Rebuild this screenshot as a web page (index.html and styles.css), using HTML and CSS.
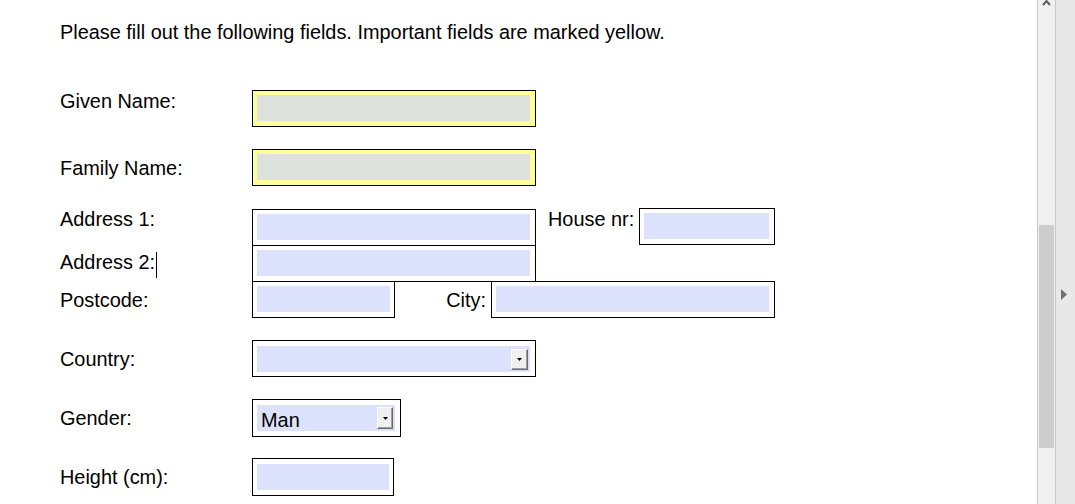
FILE: index.html
```html
<!DOCTYPE html>
<html lang="en">
<head>
<meta charset="utf-8">
<title>Form</title>
<link rel="stylesheet" href="styles.css">
</head>
<body>
<div class="page">
  <main class="content">
    <p class="intro">Please fill out the following fields. Important fields are marked yellow.</p>
    <form class="form">
      <div class="row top r-given">
        <label class="lbl">Given Name:</label>
        <span class="box imp"><input class="inp" type="text"></span>
      </div>
      <div class="row r-family">
        <label class="lbl">Family Name:</label>
        <span class="box imp"><input class="inp" type="text"></span>
      </div>
      <div class="row top r-addr1">
        <label class="lbl">Address 1:</label>
        <span class="box addr1"><input class="inp" type="text"></span>
        <label class="hlabel">House nr:</label>
        <span class="box"><input class="inp w-house" type="text"></span>
      </div>
      <div class="row r-addr2">
        <label class="lbl">Address 2:<span class="caret"></span></label>
        <span class="box"><input class="inp" type="text"></span>
      </div>
      <div class="row r-post">
        <label class="lbl">Postcode:</label>
        <span class="box narrow"><input class="inp w-small" type="text"></span>
        <label class="clabel">City:</label>
        <span class="box"><input class="inp" type="text"></span>
      </div>
      <div class="row r-country">
        <label class="lbl">Country:</label>
        <span class="box country">
          <span class="sel w-country"><span class="val"></span><span class="btn"><svg width="5" height="3" viewBox="0 0 5 3"><polygon points="0,0 5,0 2.5,3" fill="#000"/></svg></span></span>
        </span>
      </div>
      <div class="row r-gender">
        <label class="lbl">Gender:</label>
        <span class="box gender">
          <span class="sel w-gender"><span class="val">Man</span><span class="btn tall"><svg width="5" height="3" viewBox="0 0 5 3"><polygon points="0,0 5,0 2.5,3" fill="#000"/></svg></span></span>
        </span>
      </div>
      <div class="row r-height">
        <label class="lbl">Height (cm):</label>
        <span class="box narrow tallbox"><input class="inp w-height" type="text"></span>
      </div>
    </form>
  </main>
  <div class="vscroll">
    <svg class="uparrow" width="17" height="8" viewBox="0 0 17 8"><polyline points="5,6 8.5,2 12,6" fill="none" stroke="#5e5e5e" stroke-width="2"/></svg>
    <div class="thumb"></div>
  </div>
  <div class="side">
    <svg class="tri" width="19" height="12" viewBox="0 0 19 12"><polygon points="5,0 11,5.5 5,11" fill="#707070"/></svg>
  </div>
</div>
</body>
</html>
```

FILE: styles.css
```css
body {
  margin: 0;
  font-family: "Liberation Sans", Arial, sans-serif;
  font-size: 19.9px;
  color: #000;
  background: #fff;
}

.page {
  display: flex;
  height: 504px;
  overflow: hidden;
}

.content {
  flex: 1;
  padding-left: 60px;
}

.intro {
  margin: 21px 0 0;
  line-height: 23px;
}

.form {
  display: flex;
  flex-direction: column;
  margin-top: 46px;
}

.row {
  display: flex;
  align-items: center;
}

.row.top {
  align-items: flex-start;
}

.lbl {
  width: 192px;
  flex: none;
  line-height: 23px;
  margin-top: 1px;
}

.row.top .lbl {
  margin-top: 0;
}

.caret {
  display: inline-block;
  width: 1px;
  height: 26px;
  margin-left: 1px;
  background: #000;
  vertical-align: -9px;
}

.box {
  flex: none;
  display: flex;
  border: 1px solid #000;
  padding: 4px 5px 5px 4px;
  background: #fff;
}

.box.imp {
  background: #ffff99;
}

.inp {
  display: block;
  width: 273px;
  height: 26px;
  margin: 0;
  padding: 0;
  border: 0;
  outline: none;
  font: inherit;
  background: #dce2fc;
}

.box.imp .inp {
  background: #dde3dc;
}

.w-house { width: 125px; }
.w-small { width: 133px; }
.w-height { width: 132px; }

.box.narrow { padding-right: 4px; }
.box.tallbox { padding-top: 5px; padding-bottom: 5px; }

.r-family { margin-top: 22px; }
.r-addr1 { margin-top: 22px; }
.r-addr2 { margin-top: -1px; }
.r-post { margin-top: -1px; }
.r-country { margin-top: 22px; }
.r-gender { margin-top: 22px; }
.r-height { margin-top: 21px; }

.box.addr1 { margin-top: 1px; }

.hlabel {
  flex: none;
  width: 91px;
  margin-left: 12px;
  line-height: 23px;
}

.clabel {
  flex: none;
  width: 96px;
  box-sizing: border-box;
  padding-right: 5px;
  margin-top: 1px;
  text-align: right;
  line-height: 23px;
}

.box.country { padding: 5px 5px 4px 4px; }
.box.gender { padding: 5px 5px 5px 4px; }

.sel {
  display: flex;
  align-items: center;
  justify-content: space-between;
  height: 26px;
  background: #dce2fc;
}

.w-country { width: 273px; }
.w-gender { width: 138px; }

.val {
  align-self: flex-end;
  line-height: 23px;
  padding-left: 4px;
  margin-bottom: -1px;
}

.btn {
  display: flex;
  align-items: center;
  justify-content: center;
  box-sizing: border-box;
  width: 17px;
  height: 21px;
  margin-right: 2px;
  background: #f0f0f0;
  border-top: 1px solid #ffffff;
  border-left: 1px solid #ffffff;
  border-right: 1px solid #696969;
  border-bottom: 1px solid #696969;
  box-shadow: inset -1px -1px 0 #a0a0a0;
}

.btn.tall {
  width: 16px;
  height: 22px;
}

.vscroll {
  flex: none;
  width: 17px;
  border-left: 1px solid #c8c8c8;
  border-right: 1px solid #c8c8c8;
  background: #f0f0f0;
  display: flex;
  flex-direction: column;
}

.uparrow {
  display: block;
  margin-top: -1px;
}

.thumb {
  width: 15px;
  height: 223px;
  margin: 218px 0 0 1px;
  background: #cdcdcd;
}

.side {
  flex: none;
  width: 19px;
  background: #e8e8e8;
}

.tri {
  display: block;
  margin-top: 289px;
}
```
